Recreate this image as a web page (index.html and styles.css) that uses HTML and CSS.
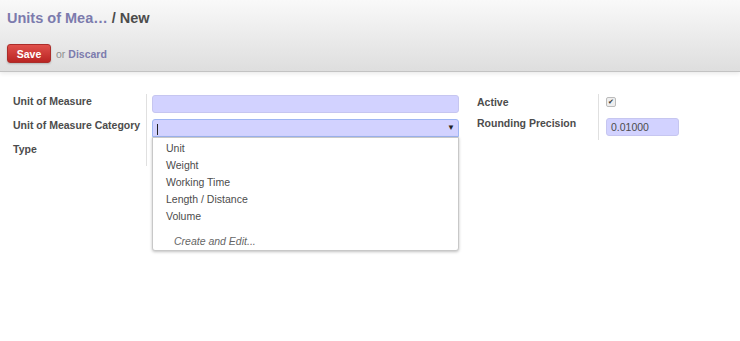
FILE: index.html
```html
<!DOCTYPE html>
<html lang="en">
<head>
<meta charset="utf-8" />
<title>Units of Measure / New</title>
<link rel="stylesheet" href="styles.css">
</head>
<body>
  <div class="header">
    <h2 class="crumbs"><a class="crumb-link">Units of Mea…</a> / New</h2>
    <div class="buttons">
      <button class="btn-save">Save</button>
      <span class="or">or</span> <a class="discard">Discard</a>
    </div>
  </div>

  <div class="sheet">
    <div class="group left-group">
      <div class="labels">
        <div class="label row-a">Unit of Measure</div>
        <div class="label row-b">Unit of Measure Category</div>
        <div class="label row-c">Type</div>
      </div>
      <div class="fields">
        <div class="input req"></div>
        <div class="combo">
          <div class="input req focus"><span class="caret"></span><span class="arrow">▼</span></div>
          <ul class="dropdown">
            <li>Unit</li>
            <li>Weight</li>
            <li>Working Time</li>
            <li>Length / Distance</li>
            <li>Volume</li>
            <li class="create">Create and Edit...</li>
          </ul>
        </div>
      </div>
    </div>

    <div class="group right-group">
      <div class="labels">
        <div class="label r-a">Active</div>
        <div class="label r-b">Rounding Precision</div>
      </div>
      <div class="fields">
        <div class="check-row"><span class="check">✔</span></div>
        <div class="input small req">0.01000</div>
      </div>
    </div>
  </div>
</body>
</html>
```

FILE: styles.css
```css
body {
  margin: 0;
  min-height: 100vh;
  font-family: "Liberation Sans", Arial, sans-serif;
  font-size: 10.5px;
  color: #4c4c4c;
  background: #fff;
}

.header {
  height: 72px;
  box-sizing: border-box;
  padding: 10px 7px 0;
  background: linear-gradient(#f9f9f9, #dedede);
  border-bottom: 1px solid #c3c3c3;
  box-shadow: 0 2px 4px rgba(0, 0, 0, 0.08);
}

.crumbs {
  margin: 0;
  font-size: 14.5px;
  font-weight: bold;
  color: #4c4c4c;
  line-height: 17px;
}

.crumb-link {
  color: #7c7bad;
}

.buttons {
  margin-top: 17px;
  display: flex;
  align-items: center;
}

.btn-save {
  width: 44px;
  height: 19px;
  padding: 0;
  border: 1px solid #ab2d2a;
  border-radius: 3px;
  background: linear-gradient(#e0504b, #b92523);
  color: #fff;
  font-family: inherit;
  font-size: 10.5px;
  font-weight: bold;
  box-shadow: 0 1px 2px rgba(0, 0, 0, 0.2);
}

.or {
  margin-left: 5px;
  color: #8e8e8e;
}

.discard {
  margin-left: 3px;
  color: #7c7bad;
  font-weight: bold;
}

.sheet {
  display: flex;
  min-height: 250px;
  padding: 22px 0 0 8px;
  align-items: flex-start;
}

.group {
  display: flex;
}

.labels {
  font-weight: bold;
  padding: 0 5px;
  white-space: nowrap;
}

.left-group .labels {
  width: 128px;
  border-right: 1px solid #e0e0e0;
  height: 72px;
  margin-right: 5px;
}

.left-group .fields {
  width: 307px;
}

.right-group {
  margin-left: 13px;
}

.right-group .labels {
  width: 116px;
  border-right: 1px solid #e0e0e0;
  height: 46px;
  margin-right: 7px;
}

.label {
  line-height: 14px;
}

.row-a { height: 24px; }
.row-b { height: 24px; }
.r-a { padding-top: 1px; height: 21px; }

.input {
  height: 18px;
  box-sizing: border-box;
  border-radius: 3px;
  margin: 1px 0 6px;
  position: relative;
  line-height: 16px;
  padding: 0 4px;
}

.req {
  background: #d2d2ff;
  border: 1px solid #c6c6f0;
}

.focus {
  border-color: #9fb6f3;
  border-radius: 3px 3px 0 0;
}

.caret {
  display: inline-block;
  width: 1px;
  height: 11px;
  background: #222;
  vertical-align: middle;
}

.arrow {
  position: absolute;
  right: 3px;
  top: 0;
  font-size: 8px;
  color: #222;
}

.combo {
  position: relative;
}

.dropdown {
  position: absolute;
  z-index: 10;
  top: 18px;
  left: 0;
  right: 0;
  margin: 0;
  padding: 2px 0 0;
  list-style: none;
  background: #fff;
  border: 1px solid #c8c8c8;
  border-radius: 0 0 3px 3px;
  box-shadow: 0 1px 3px rgba(0, 0, 0, 0.25);
}

.dropdown li {
  height: 17px;
  line-height: 17px;
  padding-left: 13px;
}

.dropdown .create {
  margin-top: 8px;
  padding-left: 21px;
  font-style: italic;
  color: #666;
}

.check-row {
  height: 24px;
  padding-top: 3px;
  box-sizing: border-box;
}

.check {
  display: block;
  width: 8px;
  height: 8px;
  border: 1px solid #bbb;
  border-radius: 2px;
  background: #eee;
  font-size: 7px;
  line-height: 8px;
  text-align: center;
  color: #333;
}

.small {
  width: 73px;
  margin-top: 0;
  color: #4c4c4c;
  line-height: 16px;
}
```
